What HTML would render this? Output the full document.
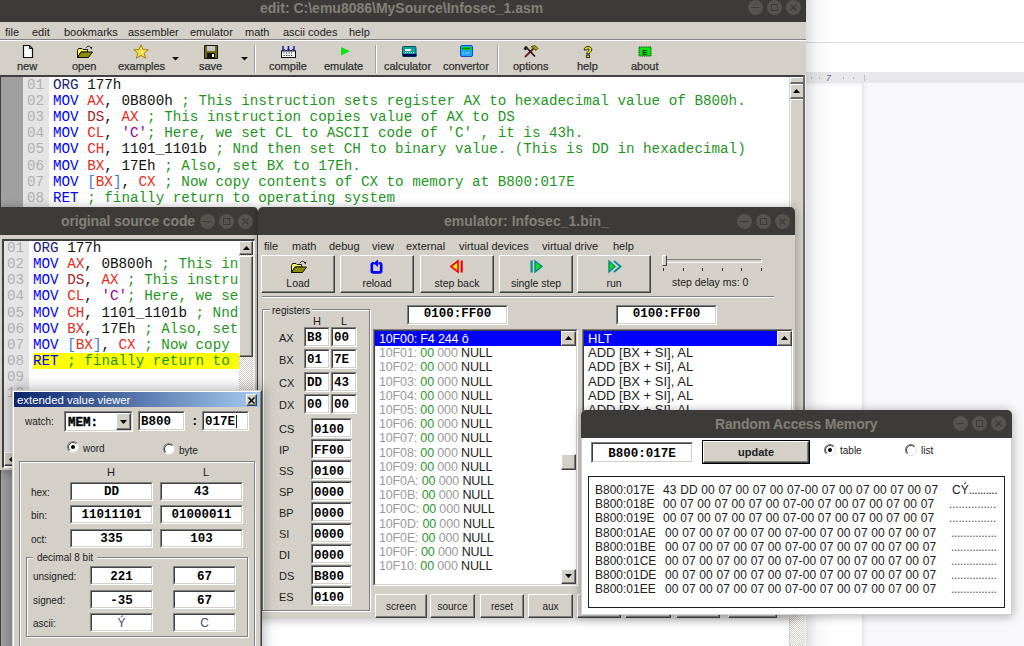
<!DOCTYPE html><html><head><meta charset="utf-8"><style>
*{box-sizing:border-box}
html,body{margin:0;padding:0;width:1024px;height:646px;overflow:hidden;background:#fff;position:relative;font-family:"Liberation Sans",sans-serif}
.a{position:absolute}
.pre{white-space:pre}
.mono{font-family:"Liberation Mono",monospace}
.k{color:#0000ff}.r{color:#e82a20}.c{color:#1e961e}.p{color:#9a00a0}.o{color:#1a1a78}.br{color:#3c78e8}.d{color:#a02424}
.dith{background-color:#d4d0c8;background-image:linear-gradient(45deg,#fff 25%,transparent 25%,transparent 75%,#fff 75%),linear-gradient(45deg,#fff 25%,transparent 25%,transparent 75%,#fff 75%);background-size:2px 2px;background-position:0 0,1px 1px}
</style></head><body>
<div class="a" style="left:806px;top:0px;width:218px;height:646px;background:#fff"></div>
<div class="a" style="left:806px;top:42px;width:218px;height:1px;background:#dcdce0"></div>
<div class="a" style="left:806px;top:72px;width:218px;height:11px;background:#e8e8ec"></div>
<div class="a" style="left:806px;top:83px;width:218px;height:4px;background:linear-gradient(rgba(0,0,0,.05),rgba(0,0,0,0))"></div>
<div class="a" style="left:862px;top:83px;width:162px;height:563px;background:linear-gradient(to right,#e4e4e8,#f2f2f5 3px,#f8f8fa 6px)"></div>
<div class="a" style="left:811px;top:77px;width:1px;height:2px;background:#b8b8bc"></div>
<div class="a" style="left:819px;top:77px;width:1px;height:2px;background:#b8b8bc"></div>
<div class="a" style="left:843px;top:77px;width:1px;height:2px;background:#b8b8bc"></div>
<div class="a" style="left:853px;top:77px;width:1px;height:2px;background:#b8b8bc"></div>
<div class="a pre " style="left:826px;top:73px;font-size:9px;line-height:10px;color:#6a6a80;font-style:italic">7</div>
<div class="a" style="left:864px;top:75px;width:1px;height:6px;background:#c0c0c4"></div>
<div class="a" style="left:806px;top:0px;width:28px;height:646px;background:linear-gradient(to right,rgba(0,0,0,.13),rgba(0,0,0,.03) 40%,rgba(0,0,0,0))"></div>
<div class="a" style="left:0px;top:0px;width:806px;height:646px;background:#d4d0c8"></div>
<div class="a" style="left:0px;top:0px;width:806px;height:22px;background:#3c3b37"></div>
<div class="a pre " style="left:260px;top:-0.5px;color:#838079;font-weight:bold;font-size:14px;line-height:17px">edit: C:\emu8086\MySource\Infosec_1.asm</div>
<div class="a" style="left:747.5px;top:0.0px;width:15px;height:15px;border-radius:50%;background:#55544f"></div>
<div class="a" style="left:766.5px;top:0.0px;width:15px;height:15px;border-radius:50%;background:#55544f"></div>
<div class="a" style="left:785.5px;top:0.0px;width:15px;height:15px;border-radius:50%;background:#55544f"></div>
<div class="a" style="left:751px;top:6.8px;width:8px;height:1.4px;background:#3c3b37"></div>
<div class="a" style="left:770.5px;top:4.0px;width:7px;height:7px;border:1.2px solid #3c3b37"></div>
<svg class="a" style="left:789.5px;top:4.0px" width="7" height="7"><path d="M0.5 0.5L6.5 6.5M6.5 0.5L0.5 6.5" stroke="#3c3b37" stroke-width="1.2"/></svg>
<div class="a" style="left:0px;top:39px;width:806px;height:1px;background:#808080"></div>
<div class="a" style="left:0px;top:40px;width:806px;height:1px;background:#fff"></div>
<div class="a pre " style="left:5px;top:25.5px;font-size:11px;line-height:13px;color:#202020">file</div>
<div class="a pre " style="left:32px;top:25.5px;font-size:11px;line-height:13px;color:#202020">edit</div>
<div class="a pre " style="left:64px;top:25.5px;font-size:11px;line-height:13px;color:#202020">bookmarks</div>
<div class="a pre " style="left:128px;top:25.5px;font-size:11px;line-height:13px;color:#202020">assembler</div>
<div class="a pre " style="left:190px;top:25.5px;font-size:11px;line-height:13px;color:#202020">emulator</div>
<div class="a pre " style="left:245px;top:25.5px;font-size:11px;line-height:13px;color:#202020">math</div>
<div class="a pre " style="left:283px;top:25.5px;font-size:11px;line-height:13px;color:#202020">ascii codes</div>
<div class="a pre " style="left:349px;top:25.5px;font-size:11px;line-height:13px;color:#202020">help</div>
<div class="a" style="left:254px;top:45px;width:2px;height:28px;background:#a0a0a0;border-right:1px solid #fff"></div>
<div class="a" style="left:375px;top:45px;width:2px;height:28px;background:#a0a0a0;border-right:1px solid #fff"></div>
<div class="a" style="left:497px;top:45px;width:2px;height:28px;background:#a0a0a0;border-right:1px solid #fff"></div>
<div class="a pre " style="left:17px;top:60px;font-size:11px;line-height:12px;color:#303030;-webkit-text-stroke:.25px #303030">new</div>
<div class="a pre " style="left:72px;top:60px;font-size:11px;line-height:12px;color:#303030;-webkit-text-stroke:.25px #303030">open</div>
<div class="a pre " style="left:118px;top:60px;font-size:11px;line-height:12px;color:#303030;-webkit-text-stroke:.25px #303030">examples</div>
<div class="a pre " style="left:199px;top:60px;font-size:11px;line-height:12px;color:#303030;-webkit-text-stroke:.25px #303030">save</div>
<div class="a pre " style="left:269px;top:60px;font-size:11px;line-height:12px;color:#303030;-webkit-text-stroke:.25px #303030">compile</div>
<div class="a pre " style="left:324px;top:60px;font-size:11px;line-height:12px;color:#303030;-webkit-text-stroke:.25px #303030">emulate</div>
<div class="a pre " style="left:384px;top:60px;font-size:11px;line-height:12px;color:#303030;-webkit-text-stroke:.25px #303030">calculator</div>
<div class="a pre " style="left:443px;top:60px;font-size:11px;line-height:12px;color:#303030;-webkit-text-stroke:.25px #303030">convertor</div>
<div class="a pre " style="left:513px;top:60px;font-size:11px;line-height:12px;color:#303030;-webkit-text-stroke:.25px #303030">options</div>
<div class="a pre " style="left:577px;top:60px;font-size:11px;line-height:12px;color:#303030;-webkit-text-stroke:.25px #303030">help</div>
<div class="a pre " style="left:631px;top:60px;font-size:11px;line-height:12px;color:#303030;-webkit-text-stroke:.25px #303030">about</div>
<svg class="a" style="left:22px;top:45px;overflow:visible" width="12" height="13" viewBox="0 0 12 13"><path d="M1.5 0.5H7.5L10.5 3.5V12.5H1.5Z" fill="#fff" stroke="#101010" stroke-width="1.2"/><path d="M7.5 0.5V3.5H10.5" fill="none" stroke="#101010" stroke-width="1"/></svg>
<svg class="a" style="left:77px;top:45px;overflow:visible" width="16" height="14" viewBox="0 0 16 14"><path d="M9 3.2C10 0.8 13 0.6 14 2.8" fill="none" stroke="#202020" stroke-width="1"/><path d="M13 2L15.5 2.2L14.2 4.6Z" fill="#101010"/><path d="M0.5 5.5L1.5 3.5H5L6 4.5H10.5V7H4L0.5 12.5Z" fill="#ffff60" stroke="#101010" stroke-width="1"/><path d="M0.5 12.5L4 7H15.5L11.5 12.5Z" fill="#8c8c00" stroke="#101010" stroke-width="1"/></svg>
<svg class="a" style="left:133px;top:44px;overflow:visible" width="16" height="15" viewBox="0 0 16 15"><path d="M8 0.8L10 5.6L15.2 5.8L11.2 9.2L12.6 14.2L8 11.4L3.4 14.2L4.8 9.2L0.8 5.8L6 5.6Z" fill="#f8e040" stroke="#a08010" stroke-width="1"/><path d="M8 3L9.3 6.6L12.8 6.8L8 10Z" fill="#fff8a0" opacity=".7"/></svg>
<svg class="a" style="left:172px;top:57px;overflow:visible" width="7" height="4" viewBox="0 0 7 4"><path d="M0 0H7L3.5 3.5Z" fill="#101010"/></svg>
<svg class="a" style="left:241px;top:57px;overflow:visible" width="7" height="4" viewBox="0 0 7 4"><path d="M0 0H7L3.5 3.5Z" fill="#101010"/></svg>
<svg class="a" style="left:204px;top:45px;overflow:visible" width="14" height="14" viewBox="0 0 14 14"><path d="M0.5 0.5H13.5V13.5H0.5Z" fill="#6c6c00" stroke="#101010" stroke-width="1"/><rect x="3" y="1" width="8" height="5" fill="#c8c8c8"/><rect x="3" y="8" width="8" height="5.5" fill="#101010"/><rect x="8" y="9" width="2" height="3" fill="#fff"/></svg>
<svg class="a" style="left:281px;top:46px;overflow:visible" width="15" height="12" viewBox="0 0 15 12"><path d="M2 0V5M7.5 0V5M13 0V5" stroke="#1010a0" stroke-width="1.4"/><path d="M1 5L3 3L5 5L7.5 3L10 5L12 3L14 5" fill="none" stroke="#3030c0" stroke-width="1"/><rect x="0.5" y="5" width="14" height="6.5" fill="#fff" stroke="#101010" stroke-width="1"/><path d="M2.5 7H12.5M2.5 9.5H12.5" stroke="#202020" stroke-width="1.2" stroke-dasharray="1.2 1.3"/></svg>
<svg class="a" style="left:341px;top:47px;overflow:visible" width="9" height="9" viewBox="0 0 9 9"><path d="M0 0L9 4.3L0 8.6Z" fill="#10e010"/></svg>
<svg class="a" style="left:402px;top:46px;overflow:visible" width="15" height="11" viewBox="0 0 15 11"><rect x="0.5" y="0.5" width="13.5" height="10" rx="1" fill="#10a0a0" stroke="#005050" stroke-width="1"/><rect x="1" y="8" width="13.5" height="2.5" fill="#000050"/><rect x="3" y="3" width="6" height="2" fill="#fff"/><path d="M3 6.5H12" stroke="#d0f0f0" stroke-width="1" stroke-dasharray="1 1"/></svg>
<svg class="a" style="left:460px;top:45px;overflow:visible" width="13" height="12" viewBox="0 0 13 12"><rect x="0.5" y="0.5" width="12" height="11" rx="1.5" fill="#20a0ff" stroke="#1050c0" stroke-width="1"/><rect x="2" y="2" width="9" height="3" fill="#00d000"/><path d="M2.5 3.5H10.5" stroke="#004000" stroke-width="1" stroke-dasharray="1 1"/><path d="M2.5 8H10.5" stroke="#e0ffff" stroke-width="1.2" stroke-dasharray="1.3 1.3"/></svg>
<svg class="a" style="left:523px;top:45px;overflow:visible" width="16" height="13" viewBox="0 0 16 13"><path d="M2 12L11 3" stroke="#702020" stroke-width="2"/><path d="M8 1.5L12 0.5L15 3.5L13 5.5L10.5 3.5Z" fill="#a0a000" stroke="#404000" stroke-width=".8"/><path d="M3 2L12 11.5" stroke="#202020" stroke-width="1.8"/><path d="M0.5 3.5L2.5 1L4.5 1.8L3.2 3.3L4 4.5L2 5.2Z" fill="#202020"/></svg>
<svg class="a" style="left:583px;top:46px;overflow:visible" width="10" height="12" viewBox="0 0 10 12"><path d="M1.2 4C1.2 1.6 3 0.6 5 0.6C7.2 0.6 8.8 1.8 8.8 3.8C8.8 6 6.2 6 6.2 8H3.8C3.8 5.2 6.2 5.2 6.2 3.8C6.2 3.2 5.7 2.7 5 2.7C4.2 2.7 3.8 3.2 3.8 4Z" fill="#f0f000" stroke="#202020" stroke-width="1"/><rect x="3.6" y="9" width="2.8" height="2.6" fill="#f0f000" stroke="#202020" stroke-width="1"/></svg>
<svg class="a" style="left:638px;top:46px;overflow:visible" width="14" height="11" viewBox="0 0 14 11"><rect x="1" y="1" width="12" height="9" fill="#10e010" stroke="#105010" stroke-width="1" stroke-dasharray="1.2 .6"/><text x="7" y="8.6" font-size="8" font-weight="bold" text-anchor="middle" fill="#003000" font-family="Liberation Sans">E</text></svg>
<div class="a" style="left:0px;top:75px;width:806px;height:571px;background:#fff;border-top:2px solid #404040"></div>
<div class="a" style="left:0px;top:77px;width:23px;height:569px;background:#a0a0a0;border-left:1px solid #404040"></div>
<div class="a" style="left:23px;top:77px;width:26px;height:569px;background:#e4e4e4"></div>
<div class="a" style="left:789px;top:77px;width:17px;height:569px;background:#d4d0c8"></div>
<div class="a dith" style="left:790px;top:611px;width:13px;height:35px"></div>
<div class="a" style="left:790px;top:77px;width:13px;height:534px;border-left:1px solid #fff"></div>
<div class="a" style="left:790px;top:77px;width:13px;height:7px;border-top:1px solid #fff;border-left:1px solid #fff;border-bottom:2px solid #6a6a6a"></div>
<div class="a" style="left:790px;top:84px;width:13px;height:15px;border-top:1px solid #fff;border-left:1px solid #fff;border-bottom:2px solid #6a6a6a"></div>
<div class="a" style="left:790px;top:99px;width:13px;height:512px;border-top:1px solid #fff;border-left:1px solid #fff;border-bottom:2px solid #6a6a6a"></div>
<svg class="a" style="left:793.0px;top:88.5px;overflow:visible" width="7" height="4" viewBox="0 0 7 4"><path d="M0 4H7L3.5 0Z" fill="#000"/></svg>
<div class="a" style="left:803px;top:75px;width:2px;height:536px;background:#6a6a6a"></div>
<div class="a" style="left:805px;top:75px;width:1px;height:571px;background:#f0f0ee"></div>
<div class="a" style="left:803px;top:611px;width:2px;height:35px;background:#e8e6e0"></div>
<div class="a pre mono" style="left:27px;top:76.8px;font-size:14.25px;line-height:16.17px;color:#b0b0b0">01
02
03
04
05
06
07
08</div>
<div class="a pre mono" style="left:53px;top:76.8px;font-size:14.25px;line-height:16.17px;color:#101010"><span class="o">ORG</span> 177h
<span class="k">MOV</span> <span class="r">AX</span>, 0B800h <span class="c">; This instruction sets register AX to hexadecimal value of B800h.</span>
<span class="k">MOV</span> <span class="d">DS</span>, <span class="r">AX</span> <span class="c">; This instruction copies value of AX to DS</span>
<span class="k">MOV</span> <span class="r">CL</span>, <span class="p">'C'</span><span class="c">; Here, we set CL to ASCII code of 'C' , it is 43h.</span>
<span class="k">MOV</span> <span class="r">CH</span>, 1101_1101b <span class="c">; Nnd then set CH to binary value. (This is DD in hexadecimal)</span>
<span class="k">MOV</span> <span class="r">BX</span>, 17Eh <span class="c">; Also, set BX to 17Eh.</span>
<span class="k">MOV</span> <span class="br">[</span><span class="r">BX</span><span class="br">]</span>, <span class="r">CX</span> <span class="c">; Now copy contents of CX to memory at B800:017E</span>
<span class="k">RET</span> <span class="c">; finally return to operating system</span></div>
<div class="a" style="left:0px;top:207px;width:258px;height:263px;background:#d4d0c8;border-right:1px solid #404040;border-radius:0 5px 0 0;box-shadow:0 1px 10px 1px rgba(0,0,0,.28)"></div>
<div class="a" style="left:0px;top:207px;width:258px;height:28px;background:#3c3b37;border-radius:0 5px 0 0"></div>
<div class="a pre " style="left:61px;top:212.5px;color:#838079;font-weight:bold;font-size:14px;line-height:17px"><span style="letter-spacing:-.15px">original source code</span></div>
<div class="a" style="left:199.5px;top:214.0px;width:15px;height:15px;border-radius:50%;background:#55544f"></div>
<div class="a" style="left:218.5px;top:214.0px;width:15px;height:15px;border-radius:50%;background:#55544f"></div>
<div class="a" style="left:237.5px;top:214.0px;width:15px;height:15px;border-radius:50%;background:#55544f"></div>
<div class="a" style="left:203px;top:220.8px;width:8px;height:1.4px;background:#3c3b37"></div>
<div class="a" style="left:222.5px;top:218.0px;width:7px;height:7px;border:1.2px solid #3c3b37"></div>
<svg class="a" style="left:241.5px;top:218.0px" width="7" height="7"><path d="M0.5 0.5L6.5 6.5M6.5 0.5L0.5 6.5" stroke="#3c3b37" stroke-width="1.2"/></svg>
<div class="a" style="left:2px;top:239px;width:253px;height:229px;background:#fff;border-top:2px solid #404040;border-left:2px solid #404040;border-right:1px solid #fff;border-bottom:1px solid #fff"></div>
<div class="a" style="left:4px;top:241px;width:25px;height:211px;background:#e4e4e4"></div>
<div class="a pre mono" style="left:7px;top:240px;font-size:14.25px;line-height:16.12px;color:#b0b0b0">01
02
03
04
05
06
07
08
09
10</div>
<div class="a" style="left:33px;top:353px;width:206px;height:16px;background:#ffff00"></div>
<div class="a" style="left:33px;top:240px;width:205px;height:212px;overflow:hidden">
<div class="a pre mono" style="left:0px;top:0px;font-size:14.25px;line-height:16.12px;color:#101010"><span class="o">ORG</span> 177h
<span class="k">MOV</span> <span class="r">AX</span>, 0B800h <span class="c">; This instruction sets register AX to hexadecimal value of B800h.</span>
<span class="k">MOV</span> <span class="d">DS</span>, <span class="r">AX</span> <span class="c">; This instruction copies value of AX to DS</span>
<span class="k">MOV</span> <span class="r">CL</span>, <span class="p">'C'</span><span class="c">; Here, we set CL to ASCII code of 'C' , it is 43h.</span>
<span class="k">MOV</span> <span class="r">CH</span>, 1101_1101b <span class="c">; Nnd then set CH to binary value. (This is DD in hexadecimal)</span>
<span class="k">MOV</span> <span class="r">BX</span>, 17Eh <span class="c">; Also, set BX to 17Eh.</span>
<span class="k">MOV</span> <span class="br">[</span><span class="r">BX</span><span class="br">]</span>, <span class="r">CX</span> <span class="c">; Now copy contents of CX to memory at B800:017E</span>
<span class="k">RET</span> <span class="c">; finally return to operating system</span></div>
</div>
<div class="a dith" style="left:239px;top:241px;width:14px;height:211px"></div>
<div class="a" style="left:239px;top:241px;width:14px;height:14px;background:#d4d0c8;border-top:1px solid #fff;border-left:1px solid #fff;border-right:1px solid #404040;border-bottom:1px solid #404040"><div style="position:absolute;left:0;top:0;right:0;bottom:0;border-right:1px solid #808080;border-bottom:1px solid #808080"></div></div>
<svg class="a" style="left:242.5px;top:246px;overflow:visible" width="7" height="4" viewBox="0 0 7 4"><path d="M0 4H7L3.5 0Z" fill="#000"/></svg>
<div class="a" style="left:239px;top:256px;width:14px;height:101px;background:#d4d0c8;border-top:1px solid #fff;border-left:1px solid #fff;border-right:1px solid #404040;border-bottom:1px solid #404040"><div style="position:absolute;left:0;top:0;right:0;bottom:0;border-right:1px solid #808080;border-bottom:1px solid #808080"></div></div>
<div class="a dith" style="left:4px;top:452px;width:249px;height:14px"></div>
<div class="a" style="left:4px;top:452px;width:14px;height:14px;background:#d4d0c8;border-top:1px solid #fff;border-left:1px solid #fff;border-right:1px solid #404040;border-bottom:1px solid #404040"><div style="position:absolute;left:0;top:0;right:0;bottom:0;border-right:1px solid #808080;border-bottom:1px solid #808080"></div></div>
<svg class="a" style="left:9px;top:455.5px;overflow:visible" width="4" height="7" viewBox="0 0 4 7"><path d="M4 0V7L0 3.5Z" fill="#000"/></svg>
<div class="a" style="left:258px;top:207px;width:537px;height:411px;background:#d4d0c8;border-radius:5px 5px 0 0;box-shadow:0 1px 10px 1px rgba(0,0,0,.28)"></div>
<div class="a" style="left:258px;top:207px;width:537px;height:28px;background:#3c3b37;border-radius:5px 5px 0 0"></div>
<div class="a pre " style="left:444px;top:213px;color:#838079;font-weight:bold;font-size:14px;line-height:17px">emulator: Infosec_1.bin_</div>
<div class="a" style="left:736.5px;top:214.0px;width:15px;height:15px;border-radius:50%;background:#55544f"></div>
<div class="a" style="left:755.5px;top:214.0px;width:15px;height:15px;border-radius:50%;background:#55544f"></div>
<div class="a" style="left:774.5px;top:214.0px;width:15px;height:15px;border-radius:50%;background:#55544f"></div>
<div class="a" style="left:740px;top:220.8px;width:8px;height:1.4px;background:#3c3b37"></div>
<div class="a" style="left:759.5px;top:218.0px;width:7px;height:7px;border:1.2px solid #3c3b37"></div>
<svg class="a" style="left:778.5px;top:218.0px" width="7" height="7"><path d="M0.5 0.5L6.5 6.5M6.5 0.5L0.5 6.5" stroke="#3c3b37" stroke-width="1.2"/></svg>
<div class="a pre " style="left:264px;top:240px;font-size:11px;line-height:13px;color:#202020">file</div>
<div class="a pre " style="left:292px;top:240px;font-size:11px;line-height:13px;color:#202020">math</div>
<div class="a pre " style="left:329px;top:240px;font-size:11px;line-height:13px;color:#202020">debug</div>
<div class="a pre " style="left:372px;top:240px;font-size:11px;line-height:13px;color:#202020">view</div>
<div class="a pre " style="left:406px;top:240px;font-size:11px;line-height:13px;color:#202020">external</div>
<div class="a pre " style="left:459px;top:240px;font-size:11px;line-height:13px;color:#202020">virtual devices</div>
<div class="a pre " style="left:542px;top:240px;font-size:11px;line-height:13px;color:#202020">virtual drive</div>
<div class="a pre " style="left:613px;top:240px;font-size:11px;line-height:13px;color:#202020">help</div>
<div class="a" style="left:261px;top:255px;width:74px;height:38px;background:#d4d0c8;border-top:1px solid #fff;border-left:1px solid #fff;border-right:1px solid #404040;border-bottom:1px solid #404040"><div style="position:absolute;left:0;top:0;right:0;bottom:0;border-right:1px solid #808080;border-bottom:1px solid #808080"></div></div>
<div class="a pre " style="left:261px;top:276.5px;font-size:10.5px;line-height:12px;color:#202020;width:74px;text-align:center">Load</div>
<div class="a" style="left:340px;top:255px;width:74px;height:38px;background:#d4d0c8;border-top:1px solid #fff;border-left:1px solid #fff;border-right:1px solid #404040;border-bottom:1px solid #404040"><div style="position:absolute;left:0;top:0;right:0;bottom:0;border-right:1px solid #808080;border-bottom:1px solid #808080"></div></div>
<div class="a pre " style="left:340px;top:276.5px;font-size:10.5px;line-height:12px;color:#202020;width:74px;text-align:center">reload</div>
<div class="a" style="left:420px;top:255px;width:74px;height:38px;background:#d4d0c8;border-top:1px solid #fff;border-left:1px solid #fff;border-right:1px solid #404040;border-bottom:1px solid #404040"><div style="position:absolute;left:0;top:0;right:0;bottom:0;border-right:1px solid #808080;border-bottom:1px solid #808080"></div></div>
<div class="a pre " style="left:420px;top:276.5px;font-size:10.5px;line-height:12px;color:#202020;width:74px;text-align:center">step back</div>
<div class="a" style="left:499px;top:255px;width:74px;height:38px;background:#d4d0c8;border-top:1px solid #fff;border-left:1px solid #fff;border-right:1px solid #404040;border-bottom:1px solid #404040"><div style="position:absolute;left:0;top:0;right:0;bottom:0;border-right:1px solid #808080;border-bottom:1px solid #808080"></div></div>
<div class="a pre " style="left:499px;top:276.5px;font-size:10.5px;line-height:12px;color:#202020;width:74px;text-align:center">single step</div>
<div class="a" style="left:577px;top:255px;width:74px;height:38px;background:#d4d0c8;border-top:1px solid #fff;border-left:1px solid #fff;border-right:1px solid #404040;border-bottom:1px solid #404040"><div style="position:absolute;left:0;top:0;right:0;bottom:0;border-right:1px solid #808080;border-bottom:1px solid #808080"></div></div>
<div class="a pre " style="left:577px;top:276.5px;font-size:10.5px;line-height:12px;color:#202020;width:74px;text-align:center">run</div>
<svg class="a" style="left:291px;top:260px;overflow:visible" width="16" height="14" viewBox="0 0 16 14"><path d="M9 3.2C10 0.8 13 0.6 14 2.8" fill="none" stroke="#202020" stroke-width="1"/><path d="M13 2L15.5 2.2L14.2 4.6Z" fill="#101010"/><path d="M0.5 5.5L1.5 3.5H5L6 4.5H10.5V7H4L0.5 12.5Z" fill="#ffff60" stroke="#101010" stroke-width="1"/><path d="M0.5 12.5L4 7H15.5L11.5 12.5Z" fill="#8c8c00" stroke="#101010" stroke-width="1"/></svg>
<svg class="a" style="left:369px;top:259px;overflow:visible" width="15" height="16" viewBox="0 0 15 16"><path d="M5 4.2H4.2Q2.8 4.2 2.8 5.6V12Q2.8 13.4 4.2 13.4H10.8Q12.2 13.4 12.2 12V5.6Q12.2 4.2 10.8 4.2H9.5" fill="none" stroke="#0000ff" stroke-width="2.6"/><path d="M4.5 4.2L9 0.5V8Z" fill="#0000ff"/></svg>
<svg class="a" style="left:450px;top:260px;overflow:visible" width="14" height="13" viewBox="0 0 14 13"><path d="M1 6.5L8 1V12Z" fill="#ffff00" stroke="#ff0000" stroke-width="1.6"/><rect x="10.6" y="0.5" width="2.2" height="12" fill="#ff0000"/></svg>
<svg class="a" style="left:530px;top:260px;overflow:visible" width="13" height="13" viewBox="0 0 13 13"><rect x="0.5" y="0.5" width="2.2" height="12" fill="#008c8c"/><path d="M5 1V12L12 6.5Z" fill="#10e010" stroke="#008c8c" stroke-width="1.4"/></svg>
<svg class="a" style="left:608px;top:260px;overflow:visible" width="14" height="13" viewBox="0 0 14 13"><path d="M1 1V12L7 6.5Z" fill="#10e010" stroke="#008c8c" stroke-width="1.4"/><path d="M6 1L12.5 6.5L6 12" fill="none" stroke="#008c8c" stroke-width="1.8"/></svg>
<div class="a" style="left:662px;top:259px;width:100px;height:4px;border-top:1px solid #808080;border-left:1px solid #808080;border-bottom:1px solid #fff;border-right:1px solid #fff;background:#d4d0c8"></div>
<div class="a" style="left:662px;top:255px;width:5px;height:11px;background:#d4d0c8;border-top:1px solid #fff;border-left:1px solid #fff;border-right:1px solid #404040;border-bottom:1px solid #404040"></div>
<div class="a" style="left:663.0px;top:268px;width:1px;height:3px;background:#303030"></div>
<div class="a" style="left:682.6px;top:268px;width:1px;height:3px;background:#303030"></div>
<div class="a" style="left:702.2px;top:268px;width:1px;height:3px;background:#303030"></div>
<div class="a" style="left:721.8px;top:268px;width:1px;height:3px;background:#303030"></div>
<div class="a" style="left:741.4px;top:268px;width:1px;height:3px;background:#303030"></div>
<div class="a" style="left:761.0px;top:268px;width:1px;height:3px;background:#303030"></div>
<div class="a" style="left:262px;top:296px;width:512px;height:2px;border-top:1px solid #808080;border-bottom:1px solid #fff"></div>
<div class="a pre " style="left:672px;top:275.5px;font-size:10.5px;line-height:12px;color:#202020">step delay ms: 0</div>
<div class="a" style="left:407px;top:305px;width:101px;height:20px;background:#fff;border-top:1px solid #808080;border-left:1px solid #808080;border-right:1px solid #fff;border-bottom:1px solid #fff"><div style="position:absolute;left:0;top:0;right:0;bottom:0;border-top:1px solid #404040;border-left:1px solid #404040;border-right:1px solid #d4d0c8;border-bottom:1px solid #d4d0c8"></div></div>
<div class="a pre mono" style="left:407px;top:307px;font-size:12.5px;font-weight:bold;line-height:15px;color:#000;width:101px;text-align:center">0100:FF00</div>
<div class="a" style="left:616px;top:305px;width:101px;height:20px;background:#fff;border-top:1px solid #808080;border-left:1px solid #808080;border-right:1px solid #fff;border-bottom:1px solid #fff"><div style="position:absolute;left:0;top:0;right:0;bottom:0;border-top:1px solid #404040;border-left:1px solid #404040;border-right:1px solid #d4d0c8;border-bottom:1px solid #d4d0c8"></div></div>
<div class="a pre mono" style="left:616px;top:307px;font-size:12.5px;font-weight:bold;line-height:15px;color:#000;width:101px;text-align:center">0100:FF00</div>
<div class="a" style="left:262px;top:309px;width:108px;height:302px;border:1px solid #808080;box-shadow:inset 1px 1px 0 #fff,1px 1px 0 #fff"></div>
<div class="a" style="left:270px;top:304px;width:42px;height:12px;background:#d4d0c8"></div>
<div class="a pre " style="left:272px;top:305px;font-size:10px;line-height:12px;color:#202020">registers</div>
<div class="a pre " style="left:313px;top:315px;font-size:11px;line-height:12px;color:#202020">H</div>
<div class="a pre " style="left:341px;top:315px;font-size:11px;line-height:12px;color:#202020">L</div>
<div class="a pre " style="left:279px;top:332px;font-size:11px;line-height:12px;color:#202020">AX</div>
<div class="a" style="left:304px;top:327px;width:26px;height:20px;background:#fff;border-top:1px solid #808080;border-left:1px solid #808080;border-right:1px solid #fff;border-bottom:1px solid #fff"><div style="position:absolute;left:0;top:0;right:0;bottom:0;border-top:1px solid #404040;border-left:1px solid #404040;border-right:1px solid #d4d0c8;border-bottom:1px solid #d4d0c8"></div></div>
<div class="a" style="left:331px;top:327px;width:26px;height:20px;background:#fff;border-top:1px solid #808080;border-left:1px solid #808080;border-right:1px solid #fff;border-bottom:1px solid #fff"><div style="position:absolute;left:0;top:0;right:0;bottom:0;border-top:1px solid #404040;border-left:1px solid #404040;border-right:1px solid #d4d0c8;border-bottom:1px solid #d4d0c8"></div></div>
<div class="a pre mono" style="left:307px;top:331px;font-size:12.5px;font-weight:bold;line-height:15px;color:#000">B8</div>
<div class="a pre mono" style="left:334px;top:331px;font-size:12.5px;font-weight:bold;line-height:15px;color:#000">00</div>
<div class="a pre " style="left:279px;top:354px;font-size:11px;line-height:12px;color:#202020">BX</div>
<div class="a" style="left:304px;top:349px;width:26px;height:20px;background:#fff;border-top:1px solid #808080;border-left:1px solid #808080;border-right:1px solid #fff;border-bottom:1px solid #fff"><div style="position:absolute;left:0;top:0;right:0;bottom:0;border-top:1px solid #404040;border-left:1px solid #404040;border-right:1px solid #d4d0c8;border-bottom:1px solid #d4d0c8"></div></div>
<div class="a" style="left:331px;top:349px;width:26px;height:20px;background:#fff;border-top:1px solid #808080;border-left:1px solid #808080;border-right:1px solid #fff;border-bottom:1px solid #fff"><div style="position:absolute;left:0;top:0;right:0;bottom:0;border-top:1px solid #404040;border-left:1px solid #404040;border-right:1px solid #d4d0c8;border-bottom:1px solid #d4d0c8"></div></div>
<div class="a pre mono" style="left:307px;top:353px;font-size:12.5px;font-weight:bold;line-height:15px;color:#000">01</div>
<div class="a pre mono" style="left:334px;top:353px;font-size:12.5px;font-weight:bold;line-height:15px;color:#000">7E</div>
<div class="a pre " style="left:279px;top:377px;font-size:11px;line-height:12px;color:#202020">CX</div>
<div class="a" style="left:304px;top:372px;width:26px;height:20px;background:#fff;border-top:1px solid #808080;border-left:1px solid #808080;border-right:1px solid #fff;border-bottom:1px solid #fff"><div style="position:absolute;left:0;top:0;right:0;bottom:0;border-top:1px solid #404040;border-left:1px solid #404040;border-right:1px solid #d4d0c8;border-bottom:1px solid #d4d0c8"></div></div>
<div class="a" style="left:331px;top:372px;width:26px;height:20px;background:#fff;border-top:1px solid #808080;border-left:1px solid #808080;border-right:1px solid #fff;border-bottom:1px solid #fff"><div style="position:absolute;left:0;top:0;right:0;bottom:0;border-top:1px solid #404040;border-left:1px solid #404040;border-right:1px solid #d4d0c8;border-bottom:1px solid #d4d0c8"></div></div>
<div class="a pre mono" style="left:307px;top:376px;font-size:12.5px;font-weight:bold;line-height:15px;color:#000">DD</div>
<div class="a pre mono" style="left:334px;top:376px;font-size:12.5px;font-weight:bold;line-height:15px;color:#000">43</div>
<div class="a pre " style="left:279px;top:399px;font-size:11px;line-height:12px;color:#202020">DX</div>
<div class="a" style="left:304px;top:394px;width:26px;height:20px;background:#fff;border-top:1px solid #808080;border-left:1px solid #808080;border-right:1px solid #fff;border-bottom:1px solid #fff"><div style="position:absolute;left:0;top:0;right:0;bottom:0;border-top:1px solid #404040;border-left:1px solid #404040;border-right:1px solid #d4d0c8;border-bottom:1px solid #d4d0c8"></div></div>
<div class="a" style="left:331px;top:394px;width:26px;height:20px;background:#fff;border-top:1px solid #808080;border-left:1px solid #808080;border-right:1px solid #fff;border-bottom:1px solid #fff"><div style="position:absolute;left:0;top:0;right:0;bottom:0;border-top:1px solid #404040;border-left:1px solid #404040;border-right:1px solid #d4d0c8;border-bottom:1px solid #d4d0c8"></div></div>
<div class="a pre mono" style="left:307px;top:398px;font-size:12.5px;font-weight:bold;line-height:15px;color:#000">00</div>
<div class="a pre mono" style="left:334px;top:398px;font-size:12.5px;font-weight:bold;line-height:15px;color:#000">00</div>
<div class="a pre " style="left:279px;top:423px;font-size:11px;line-height:12px;color:#202020">CS</div>
<div class="a" style="left:311px;top:418px;width:41px;height:20px;background:#fff;border-top:1px solid #808080;border-left:1px solid #808080;border-right:1px solid #fff;border-bottom:1px solid #fff"><div style="position:absolute;left:0;top:0;right:0;bottom:0;border-top:1px solid #404040;border-left:1px solid #404040;border-right:1px solid #d4d0c8;border-bottom:1px solid #d4d0c8"></div></div>
<div class="a pre mono" style="left:314px;top:422.5px;font-size:12.5px;font-weight:bold;line-height:15px;color:#000">0100</div>
<div class="a pre " style="left:279px;top:444px;font-size:11px;line-height:12px;color:#202020">IP</div>
<div class="a" style="left:311px;top:439px;width:41px;height:20px;background:#fff;border-top:1px solid #808080;border-left:1px solid #808080;border-right:1px solid #fff;border-bottom:1px solid #fff"><div style="position:absolute;left:0;top:0;right:0;bottom:0;border-top:1px solid #404040;border-left:1px solid #404040;border-right:1px solid #d4d0c8;border-bottom:1px solid #d4d0c8"></div></div>
<div class="a pre mono" style="left:314px;top:443.5px;font-size:12.5px;font-weight:bold;line-height:15px;color:#000">FF00</div>
<div class="a pre " style="left:279px;top:465px;font-size:11px;line-height:12px;color:#202020">SS</div>
<div class="a" style="left:311px;top:460px;width:41px;height:20px;background:#fff;border-top:1px solid #808080;border-left:1px solid #808080;border-right:1px solid #fff;border-bottom:1px solid #fff"><div style="position:absolute;left:0;top:0;right:0;bottom:0;border-top:1px solid #404040;border-left:1px solid #404040;border-right:1px solid #d4d0c8;border-bottom:1px solid #d4d0c8"></div></div>
<div class="a pre mono" style="left:314px;top:464.5px;font-size:12.5px;font-weight:bold;line-height:15px;color:#000">0100</div>
<div class="a pre " style="left:279px;top:486px;font-size:11px;line-height:12px;color:#202020">SP</div>
<div class="a" style="left:311px;top:481px;width:41px;height:20px;background:#fff;border-top:1px solid #808080;border-left:1px solid #808080;border-right:1px solid #fff;border-bottom:1px solid #fff"><div style="position:absolute;left:0;top:0;right:0;bottom:0;border-top:1px solid #404040;border-left:1px solid #404040;border-right:1px solid #d4d0c8;border-bottom:1px solid #d4d0c8"></div></div>
<div class="a pre mono" style="left:314px;top:485.5px;font-size:12.5px;font-weight:bold;line-height:15px;color:#000">0000</div>
<div class="a pre " style="left:279px;top:507px;font-size:11px;line-height:12px;color:#202020">BP</div>
<div class="a" style="left:311px;top:502px;width:41px;height:20px;background:#fff;border-top:1px solid #808080;border-left:1px solid #808080;border-right:1px solid #fff;border-bottom:1px solid #fff"><div style="position:absolute;left:0;top:0;right:0;bottom:0;border-top:1px solid #404040;border-left:1px solid #404040;border-right:1px solid #d4d0c8;border-bottom:1px solid #d4d0c8"></div></div>
<div class="a pre mono" style="left:314px;top:506.5px;font-size:12.5px;font-weight:bold;line-height:15px;color:#000">0000</div>
<div class="a pre " style="left:279px;top:528px;font-size:11px;line-height:12px;color:#202020">SI</div>
<div class="a" style="left:311px;top:523px;width:41px;height:20px;background:#fff;border-top:1px solid #808080;border-left:1px solid #808080;border-right:1px solid #fff;border-bottom:1px solid #fff"><div style="position:absolute;left:0;top:0;right:0;bottom:0;border-top:1px solid #404040;border-left:1px solid #404040;border-right:1px solid #d4d0c8;border-bottom:1px solid #d4d0c8"></div></div>
<div class="a pre mono" style="left:314px;top:527.5px;font-size:12.5px;font-weight:bold;line-height:15px;color:#000">0000</div>
<div class="a pre " style="left:279px;top:549px;font-size:11px;line-height:12px;color:#202020">DI</div>
<div class="a" style="left:311px;top:544px;width:41px;height:20px;background:#fff;border-top:1px solid #808080;border-left:1px solid #808080;border-right:1px solid #fff;border-bottom:1px solid #fff"><div style="position:absolute;left:0;top:0;right:0;bottom:0;border-top:1px solid #404040;border-left:1px solid #404040;border-right:1px solid #d4d0c8;border-bottom:1px solid #d4d0c8"></div></div>
<div class="a pre mono" style="left:314px;top:548.5px;font-size:12.5px;font-weight:bold;line-height:15px;color:#000">0000</div>
<div class="a pre " style="left:279px;top:570px;font-size:11px;line-height:12px;color:#202020">DS</div>
<div class="a" style="left:311px;top:565px;width:41px;height:20px;background:#fff;border-top:1px solid #808080;border-left:1px solid #808080;border-right:1px solid #fff;border-bottom:1px solid #fff"><div style="position:absolute;left:0;top:0;right:0;bottom:0;border-top:1px solid #404040;border-left:1px solid #404040;border-right:1px solid #d4d0c8;border-bottom:1px solid #d4d0c8"></div></div>
<div class="a pre mono" style="left:314px;top:569.5px;font-size:12.5px;font-weight:bold;line-height:15px;color:#000">B800</div>
<div class="a pre " style="left:279px;top:591px;font-size:11px;line-height:12px;color:#202020">ES</div>
<div class="a" style="left:311px;top:586px;width:41px;height:20px;background:#fff;border-top:1px solid #808080;border-left:1px solid #808080;border-right:1px solid #fff;border-bottom:1px solid #fff"><div style="position:absolute;left:0;top:0;right:0;bottom:0;border-top:1px solid #404040;border-left:1px solid #404040;border-right:1px solid #d4d0c8;border-bottom:1px solid #d4d0c8"></div></div>
<div class="a pre mono" style="left:314px;top:590.5px;font-size:12.5px;font-weight:bold;line-height:15px;color:#000">0100</div>
<div class="a" style="left:373px;top:329px;width:205px;height:257px;background:#fff;border-top:1px solid #808080;border-left:1px solid #808080;border-right:1px solid #fff;border-bottom:1px solid #fff"><div style="position:absolute;left:0;top:0;right:0;bottom:0;border-top:1px solid #404040;border-left:1px solid #404040;border-right:1px solid #d4d0c8;border-bottom:1px solid #d4d0c8"></div></div>
<div class="a" style="left:375px;top:331px;width:186px;height:15px;background:#0000ff"></div>
<div class="a pre " style="left:379px;top:332px;font-size:12.5px;line-height:14.2px;color:#fff;letter-spacing:-.15px">10F00: F4 244 &ocirc;</div>
<div class="a pre " style="left:379px;top:346.2px;font-size:12.5px;line-height:14.2px;color:#9a9a9a;letter-spacing:-.15px">10F01: <span style="color:#2e962e">00</span> 000 <span style="color:#202020">NULL</span>
10F02: <span style="color:#2e962e">00</span> 000 <span style="color:#202020">NULL</span>
10F03: <span style="color:#2e962e">00</span> 000 <span style="color:#202020">NULL</span>
10F04: <span style="color:#2e962e">00</span> 000 <span style="color:#202020">NULL</span>
10F05: <span style="color:#2e962e">00</span> 000 <span style="color:#202020">NULL</span>
10F06: <span style="color:#2e962e">00</span> 000 <span style="color:#202020">NULL</span>
10F07: <span style="color:#2e962e">00</span> 000 <span style="color:#202020">NULL</span>
10F08: <span style="color:#2e962e">00</span> 000 <span style="color:#202020">NULL</span>
10F09: <span style="color:#2e962e">00</span> 000 <span style="color:#202020">NULL</span>
10F0A: <span style="color:#2e962e">00</span> 000 <span style="color:#202020">NULL</span>
10F0B: <span style="color:#2e962e">00</span> 000 <span style="color:#202020">NULL</span>
10F0C: <span style="color:#2e962e">00</span> 000 <span style="color:#202020">NULL</span>
10F0D: <span style="color:#2e962e">00</span> 000 <span style="color:#202020">NULL</span>
10F0E: <span style="color:#2e962e">00</span> 000 <span style="color:#202020">NULL</span>
10F0F: <span style="color:#2e962e">00</span> 000 <span style="color:#202020">NULL</span>
10F10: <span style="color:#2e962e">00</span> 000 <span style="color:#202020">NULL</span></div>
<div class="a" style="left:561px;top:331px;width:15px;height:15px;background:#d4d0c8;border-top:1px solid #fff;border-left:1px solid #fff;border-right:1px solid #404040;border-bottom:1px solid #404040"><div style="position:absolute;left:0;top:0;right:0;bottom:0;border-right:1px solid #808080;border-bottom:1px solid #808080"></div></div>
<svg class="a" style="left:564.5px;top:336px;overflow:visible" width="7" height="4" viewBox="0 0 7 4"><path d="M0 4H7L3.5 0Z" fill="#000"/></svg>
<div class="a" style="left:561px;top:454px;width:15px;height:16px;background:#d4d0c8;border-top:1px solid #fff;border-left:1px solid #fff;border-right:1px solid #404040;border-bottom:1px solid #404040"><div style="position:absolute;left:0;top:0;right:0;bottom:0;border-right:1px solid #808080;border-bottom:1px solid #808080"></div></div>
<div class="a" style="left:561px;top:569px;width:15px;height:15px;background:#d4d0c8;border-top:1px solid #fff;border-left:1px solid #fff;border-right:1px solid #404040;border-bottom:1px solid #404040"><div style="position:absolute;left:0;top:0;right:0;bottom:0;border-right:1px solid #808080;border-bottom:1px solid #808080"></div></div>
<svg class="a" style="left:564.5px;top:574px;overflow:visible" width="7" height="4" viewBox="0 0 7 4"><path d="M0 0H7L3.5 4Z" fill="#000"/></svg>
<div class="a" style="left:582px;top:329px;width:211px;height:257px;background:#fff;border-top:1px solid #808080;border-left:1px solid #808080;border-right:1px solid #fff;border-bottom:1px solid #fff"><div style="position:absolute;left:0;top:0;right:0;bottom:0;border-top:1px solid #404040;border-left:1px solid #404040;border-right:1px solid #d4d0c8;border-bottom:1px solid #d4d0c8"></div></div>
<div class="a" style="left:584px;top:331px;width:193px;height:15px;background:#0000ff"></div>
<div class="a pre " style="left:588px;top:332px;font-size:13px;line-height:14.2px;color:#fff">HLT</div>
<div class="a pre " style="left:588px;top:346.2px;font-size:13px;line-height:14.2px;color:#202020">ADD [BX + SI], AL
ADD [BX + SI], AL
ADD [BX + SI], AL
ADD [BX + SI], AL
ADD [BX + SI], AL
ADD [BX + SI], AL
ADD [BX + SI], AL
ADD [BX + SI], AL
ADD [BX + SI], AL
ADD [BX + SI], AL
ADD [BX + SI], AL
ADD [BX + SI], AL
ADD [BX + SI], AL
ADD [BX + SI], AL
ADD [BX + SI], AL
ADD [BX + SI], AL</div>
<div class="a" style="left:777px;top:331px;width:15px;height:15px;background:#d4d0c8;border-top:1px solid #fff;border-left:1px solid #fff;border-right:1px solid #404040;border-bottom:1px solid #404040"><div style="position:absolute;left:0;top:0;right:0;bottom:0;border-right:1px solid #808080;border-bottom:1px solid #808080"></div></div>
<svg class="a" style="left:780.5px;top:336px;overflow:visible" width="7" height="4" viewBox="0 0 7 4"><path d="M0 4H7L3.5 0Z" fill="#000"/></svg>
<div class="a" style="left:375px;top:594px;width:52px;height:24px;background:#d4d0c8;border-top:1px solid #fff;border-left:1px solid #fff;border-right:1px solid #404040;border-bottom:1px solid #404040"><div style="position:absolute;left:0;top:0;right:0;bottom:0;border-right:1px solid #808080;border-bottom:1px solid #808080"></div></div>
<div class="a pre " style="left:375px;top:601px;font-size:10px;line-height:12px;color:#202020;width:52px;text-align:center">screen</div>
<div class="a" style="left:430px;top:594px;width:45px;height:24px;background:#d4d0c8;border-top:1px solid #fff;border-left:1px solid #fff;border-right:1px solid #404040;border-bottom:1px solid #404040"><div style="position:absolute;left:0;top:0;right:0;bottom:0;border-right:1px solid #808080;border-bottom:1px solid #808080"></div></div>
<div class="a pre " style="left:430px;top:601px;font-size:10px;line-height:12px;color:#202020;width:45px;text-align:center">source</div>
<div class="a" style="left:480px;top:594px;width:44px;height:24px;background:#d4d0c8;border-top:1px solid #fff;border-left:1px solid #fff;border-right:1px solid #404040;border-bottom:1px solid #404040"><div style="position:absolute;left:0;top:0;right:0;bottom:0;border-right:1px solid #808080;border-bottom:1px solid #808080"></div></div>
<div class="a pre " style="left:480px;top:601px;font-size:10px;line-height:12px;color:#202020;width:44px;text-align:center">reset</div>
<div class="a" style="left:528px;top:594px;width:45px;height:24px;background:#d4d0c8;border-top:1px solid #fff;border-left:1px solid #fff;border-right:1px solid #404040;border-bottom:1px solid #404040"><div style="position:absolute;left:0;top:0;right:0;bottom:0;border-right:1px solid #808080;border-bottom:1px solid #808080"></div></div>
<div class="a pre " style="left:528px;top:601px;font-size:10px;line-height:12px;color:#202020;width:45px;text-align:center">aux</div>
<div class="a" style="left:577px;top:594px;width:44px;height:24px;background:#d4d0c8;border-top:1px solid #fff;border-left:1px solid #fff;border-right:1px solid #404040;border-bottom:1px solid #404040"><div style="position:absolute;left:0;top:0;right:0;bottom:0;border-right:1px solid #808080;border-bottom:1px solid #808080"></div></div>
<div class="a pre " style="left:577px;top:601px;font-size:10px;line-height:12px;color:#202020;width:44px;text-align:center"></div>
<div class="a" style="left:625px;top:594px;width:46px;height:24px;background:#d4d0c8;border-top:1px solid #fff;border-left:1px solid #fff;border-right:1px solid #404040;border-bottom:1px solid #404040"><div style="position:absolute;left:0;top:0;right:0;bottom:0;border-right:1px solid #808080;border-bottom:1px solid #808080"></div></div>
<div class="a pre " style="left:625px;top:601px;font-size:10px;line-height:12px;color:#202020;width:46px;text-align:center"></div>
<div class="a" style="left:676px;top:594px;width:44px;height:24px;background:#d4d0c8;border-top:1px solid #fff;border-left:1px solid #fff;border-right:1px solid #404040;border-bottom:1px solid #404040"><div style="position:absolute;left:0;top:0;right:0;bottom:0;border-right:1px solid #808080;border-bottom:1px solid #808080"></div></div>
<div class="a pre " style="left:676px;top:601px;font-size:10px;line-height:12px;color:#202020;width:44px;text-align:center"></div>
<div class="a" style="left:728px;top:594px;width:49px;height:24px;background:#d4d0c8;border-top:1px solid #fff;border-left:1px solid #fff;border-right:1px solid #404040;border-bottom:1px solid #404040"><div style="position:absolute;left:0;top:0;right:0;bottom:0;border-right:1px solid #808080;border-bottom:1px solid #808080"></div></div>
<div class="a pre " style="left:728px;top:601px;font-size:10px;line-height:12px;color:#202020;width:49px;text-align:center"></div>
<div class="a" style="left:12px;top:390px;width:250px;height:270px;background:#d4d0c8;border-top:1px solid #d4d0c8;border-left:1px solid #d4d0c8;border-right:1px solid #404040;box-shadow:0 0 12px 2px rgba(0,0,0,.28)"><div style="position:absolute;left:0;top:0;right:0;bottom:0;border-top:1px solid #fff;border-left:1px solid #fff;border-right:1px solid #808080"></div></div>
<div class="a" style="left:14px;top:392px;width:246px;height:15px;background:linear-gradient(to right,#0a246a,#a6caf0)"></div>
<div class="a pre " style="left:17px;top:393.5px;font-size:11.4px;line-height:13px;color:#fff">extended value viewer</div>
<div class="a" style="left:246px;top:394px;width:11px;height:12px;background:#d4d0c8;border-top:1px solid #fff;border-left:1px solid #fff;border-right:1px solid #404040;border-bottom:1px solid #404040"><div style="position:absolute;left:0;top:0;right:0;bottom:0;border-right:1px solid #808080;border-bottom:1px solid #808080"></div></div>
<svg class="a" style="left:248px;top:396.5px;overflow:visible" width="7" height="7" viewBox="0 0 7 7"><path d="M0.5 0.5L6.5 6.5M6.5 0.5L0.5 6.5" stroke="#000" stroke-width="1.5"/></svg>
<div class="a pre " style="left:25px;top:416px;font-size:10px;line-height:12px;color:#202020">watch:</div>
<div class="a" style="left:64px;top:411px;width:69px;height:21px;background:#fff;border-top:1px solid #808080;border-left:1px solid #808080;border-right:1px solid #fff;border-bottom:1px solid #fff"><div style="position:absolute;left:0;top:0;right:0;bottom:0;border-top:1px solid #404040;border-left:1px solid #404040;border-right:1px solid #d4d0c8;border-bottom:1px solid #d4d0c8"></div></div>
<div class="a" style="left:116px;top:413px;width:15px;height:17px;background:#d4d0c8;border-top:1px solid #fff;border-left:1px solid #fff;border-right:1px solid #404040;border-bottom:1px solid #404040"><div style="position:absolute;left:0;top:0;right:0;bottom:0;border-right:1px solid #808080;border-bottom:1px solid #808080"></div></div>
<svg class="a" style="left:120.0px;top:419.5px;overflow:visible" width="7" height="4" viewBox="0 0 7 4"><path d="M0 0H7L3.5 4Z" fill="#000"/></svg>
<div class="a pre mono" style="left:68px;top:415.5px;font-size:12.5px;font-weight:bold;line-height:15px;color:#000;-webkit-text-stroke:.4px #000">MEM:</div>
<div class="a" style="left:138px;top:411px;width:47px;height:20px;background:#fff;border-top:1px solid #808080;border-left:1px solid #808080;border-right:1px solid #fff;border-bottom:1px solid #fff"><div style="position:absolute;left:0;top:0;right:0;bottom:0;border-top:1px solid #404040;border-left:1px solid #404040;border-right:1px solid #d4d0c8;border-bottom:1px solid #d4d0c8"></div></div>
<div class="a pre mono" style="left:141px;top:415px;font-size:12.5px;font-weight:bold;line-height:15px;color:#000">B800</div>
<div class="a pre mono" style="left:191px;top:415px;font-size:12.5px;font-weight:bold;line-height:15px;color:#000">:</div>
<div class="a" style="left:202px;top:411px;width:47px;height:20px;background:#fff;border-top:1px solid #808080;border-left:1px solid #808080;border-right:1px solid #fff;border-bottom:1px solid #fff"><div style="position:absolute;left:0;top:0;right:0;bottom:0;border-top:1px solid #404040;border-left:1px solid #404040;border-right:1px solid #d4d0c8;border-bottom:1px solid #d4d0c8"></div></div>
<div class="a pre mono" style="left:205px;top:415px;font-size:12.5px;font-weight:bold;line-height:15px;color:#000">017E</div>
<div class="a" style="left:236px;top:415px;width:1px;height:13px;background:#202020"></div>
<svg class="a" style="left:67px;top:441px;overflow:visible" width="12" height="12" viewBox="0 0 12 12"><circle cx="6" cy="6" r="5.5" fill="#fff" stroke="#e0ddd6" stroke-width="1"/><path d="M2.1 9.9A5.5 5.5 0 0 1 9.9 2.1" fill="none" stroke="#808080" stroke-width="1.1"/><path d="M2.8 9.2A4.5 4.5 0 0 1 9.2 2.8" fill="none" stroke="#404040" stroke-width="1"/><circle cx="6" cy="6" r="2" fill="#000"/></svg>
<div class="a pre " style="left:83px;top:443px;font-size:10px;line-height:12px;color:#202020">word</div>
<svg class="a" style="left:163px;top:443px;overflow:visible" width="12" height="12" viewBox="0 0 12 12"><circle cx="6" cy="6" r="5.5" fill="#fff" stroke="#e0ddd6" stroke-width="1"/><path d="M2.1 9.9A5.5 5.5 0 0 1 9.9 2.1" fill="none" stroke="#808080" stroke-width="1.1"/><path d="M2.8 9.2A4.5 4.5 0 0 1 9.2 2.8" fill="none" stroke="#404040" stroke-width="1"/></svg>
<div class="a pre " style="left:179px;top:445px;font-size:10px;line-height:12px;color:#202020">byte</div>
<div class="a" style="left:19px;top:461px;width:236px;height:200px;border:1px solid #808080;box-shadow:inset 1px 1px 0 #fff,1px 1px 0 #fff"></div>
<div class="a pre " style="left:107px;top:466px;font-size:11px;line-height:12px;color:#202020">H</div>
<div class="a pre " style="left:203px;top:466px;font-size:11px;line-height:12px;color:#202020">L</div>
<div class="a pre " style="left:31px;top:487px;font-size:10px;line-height:12px;color:#202020">hex:</div>
<div class="a" style="left:70px;top:482px;width:83px;height:19px;background:#fff;border-top:1px solid #808080;border-left:1px solid #808080;border-right:1px solid #fff;border-bottom:1px solid #fff"><div style="position:absolute;left:0;top:0;right:0;bottom:0;border-top:1px solid #404040;border-left:1px solid #404040;border-right:1px solid #d4d0c8;border-bottom:1px solid #d4d0c8"></div></div>
<div class="a" style="left:160px;top:482px;width:83px;height:19px;background:#fff;border-top:1px solid #808080;border-left:1px solid #808080;border-right:1px solid #fff;border-bottom:1px solid #fff"><div style="position:absolute;left:0;top:0;right:0;bottom:0;border-top:1px solid #404040;border-left:1px solid #404040;border-right:1px solid #d4d0c8;border-bottom:1px solid #d4d0c8"></div></div>
<div class="a pre mono" style="left:70px;top:485px;font-size:12.5px;font-weight:bold;line-height:15px;color:#000;width:83px;text-align:center">DD</div>
<div class="a pre mono" style="left:160px;top:485px;font-size:12.5px;font-weight:bold;line-height:15px;color:#000;width:83px;text-align:center">43</div>
<div class="a pre " style="left:31px;top:510px;font-size:10px;line-height:12px;color:#202020">bin:</div>
<div class="a" style="left:70px;top:505px;width:83px;height:19px;background:#fff;border-top:1px solid #808080;border-left:1px solid #808080;border-right:1px solid #fff;border-bottom:1px solid #fff"><div style="position:absolute;left:0;top:0;right:0;bottom:0;border-top:1px solid #404040;border-left:1px solid #404040;border-right:1px solid #d4d0c8;border-bottom:1px solid #d4d0c8"></div></div>
<div class="a" style="left:160px;top:505px;width:83px;height:19px;background:#fff;border-top:1px solid #808080;border-left:1px solid #808080;border-right:1px solid #fff;border-bottom:1px solid #fff"><div style="position:absolute;left:0;top:0;right:0;bottom:0;border-top:1px solid #404040;border-left:1px solid #404040;border-right:1px solid #d4d0c8;border-bottom:1px solid #d4d0c8"></div></div>
<div class="a pre mono" style="left:70px;top:508px;font-size:12.5px;font-weight:bold;line-height:15px;color:#000;width:83px;text-align:center">11011101</div>
<div class="a pre mono" style="left:160px;top:508px;font-size:12.5px;font-weight:bold;line-height:15px;color:#000;width:83px;text-align:center">01000011</div>
<div class="a pre " style="left:31px;top:534px;font-size:10px;line-height:12px;color:#202020">oct:</div>
<div class="a" style="left:70px;top:529px;width:83px;height:19px;background:#fff;border-top:1px solid #808080;border-left:1px solid #808080;border-right:1px solid #fff;border-bottom:1px solid #fff"><div style="position:absolute;left:0;top:0;right:0;bottom:0;border-top:1px solid #404040;border-left:1px solid #404040;border-right:1px solid #d4d0c8;border-bottom:1px solid #d4d0c8"></div></div>
<div class="a" style="left:160px;top:529px;width:83px;height:19px;background:#fff;border-top:1px solid #808080;border-left:1px solid #808080;border-right:1px solid #fff;border-bottom:1px solid #fff"><div style="position:absolute;left:0;top:0;right:0;bottom:0;border-top:1px solid #404040;border-left:1px solid #404040;border-right:1px solid #d4d0c8;border-bottom:1px solid #d4d0c8"></div></div>
<div class="a pre mono" style="left:70px;top:532px;font-size:12.5px;font-weight:bold;line-height:15px;color:#000;width:83px;text-align:center">335</div>
<div class="a pre mono" style="left:160px;top:532px;font-size:12.5px;font-weight:bold;line-height:15px;color:#000;width:83px;text-align:center">103</div>
<div class="a" style="left:26px;top:557px;width:222px;height:80px;border:1px solid #808080;box-shadow:inset 1px 1px 0 #fff,1px 1px 0 #fff"></div>
<div class="a" style="left:33px;top:552px;width:64px;height:12px;background:#d4d0c8"></div>
<div class="a pre " style="left:37px;top:552px;font-size:10px;line-height:12px;color:#202020">decimal 8 bit</div>
<div class="a pre " style="left:33px;top:571px;font-size:10px;line-height:12px;color:#202020">unsigned:</div>
<div class="a" style="left:90px;top:566px;width:63px;height:19px;background:#fff;border-top:1px solid #808080;border-left:1px solid #808080;border-right:1px solid #fff;border-bottom:1px solid #fff"><div style="position:absolute;left:0;top:0;right:0;bottom:0;border-top:1px solid #404040;border-left:1px solid #404040;border-right:1px solid #d4d0c8;border-bottom:1px solid #d4d0c8"></div></div>
<div class="a" style="left:173px;top:566px;width:63px;height:19px;background:#fff;border-top:1px solid #808080;border-left:1px solid #808080;border-right:1px solid #fff;border-bottom:1px solid #fff"><div style="position:absolute;left:0;top:0;right:0;bottom:0;border-top:1px solid #404040;border-left:1px solid #404040;border-right:1px solid #d4d0c8;border-bottom:1px solid #d4d0c8"></div></div>
<div class="a pre mono" style="left:90px;top:569.5px;font-size:12.5px;font-weight:bold;line-height:15px;color:#000;width:63px;text-align:center">221</div>
<div class="a pre mono" style="left:173px;top:569.5px;font-size:12.5px;font-weight:bold;line-height:15px;color:#000;width:63px;text-align:center">67</div>
<div class="a pre " style="left:33px;top:595px;font-size:10px;line-height:12px;color:#202020">signed:</div>
<div class="a" style="left:90px;top:590px;width:63px;height:19px;background:#fff;border-top:1px solid #808080;border-left:1px solid #808080;border-right:1px solid #fff;border-bottom:1px solid #fff"><div style="position:absolute;left:0;top:0;right:0;bottom:0;border-top:1px solid #404040;border-left:1px solid #404040;border-right:1px solid #d4d0c8;border-bottom:1px solid #d4d0c8"></div></div>
<div class="a" style="left:173px;top:590px;width:63px;height:19px;background:#fff;border-top:1px solid #808080;border-left:1px solid #808080;border-right:1px solid #fff;border-bottom:1px solid #fff"><div style="position:absolute;left:0;top:0;right:0;bottom:0;border-top:1px solid #404040;border-left:1px solid #404040;border-right:1px solid #d4d0c8;border-bottom:1px solid #d4d0c8"></div></div>
<div class="a pre mono" style="left:90px;top:593.5px;font-size:12.5px;font-weight:bold;line-height:15px;color:#000;width:63px;text-align:center">-35</div>
<div class="a pre mono" style="left:173px;top:593.5px;font-size:12.5px;font-weight:bold;line-height:15px;color:#000;width:63px;text-align:center">67</div>
<div class="a pre " style="left:33px;top:618px;font-size:10px;line-height:12px;color:#202020">ascii:</div>
<div class="a" style="left:90px;top:613px;width:63px;height:19px;background:#fff;border-top:1px solid #808080;border-left:1px solid #808080;border-right:1px solid #fff;border-bottom:1px solid #fff"><div style="position:absolute;left:0;top:0;right:0;bottom:0;border-top:1px solid #404040;border-left:1px solid #404040;border-right:1px solid #d4d0c8;border-bottom:1px solid #d4d0c8"></div></div>
<div class="a" style="left:173px;top:613px;width:63px;height:19px;background:#fff;border-top:1px solid #808080;border-left:1px solid #808080;border-right:1px solid #fff;border-bottom:1px solid #fff"><div style="position:absolute;left:0;top:0;right:0;bottom:0;border-top:1px solid #404040;border-left:1px solid #404040;border-right:1px solid #d4d0c8;border-bottom:1px solid #d4d0c8"></div></div>
<div class="a pre " style="left:90px;top:616px;font-size:12px;line-height:14px;color:#405070;width:63px;text-align:center">&Yacute;</div>
<div class="a pre " style="left:173px;top:616px;font-size:12px;line-height:14px;color:#405070;width:63px;text-align:center">C</div>
<div class="a" style="left:581px;top:410px;width:431px;height:205px;background:#fff;border-left:1px solid #d0d0d0;border-right:1px solid #d0d0d0;border-bottom:1px solid #d0d0d0;border-radius:5px 5px 0 0;box-shadow:0 1px 10px 1px rgba(0,0,0,.28)"></div>
<div class="a" style="left:581px;top:410px;width:431px;height:28px;background:#3c3b37;border-radius:5px 5px 0 0"></div>
<div class="a pre " style="left:715px;top:415.5px;color:#838079;font-weight:bold;font-size:14px;line-height:17px"><span style="letter-spacing:-.18px">Random Access Memory</span></div>
<div class="a" style="left:952.5px;top:416.0px;width:15px;height:15px;border-radius:50%;background:#55544f"></div>
<div class="a" style="left:971.5px;top:416.0px;width:15px;height:15px;border-radius:50%;background:#55544f"></div>
<div class="a" style="left:990.5px;top:416.0px;width:15px;height:15px;border-radius:50%;background:#55544f"></div>
<div class="a" style="left:956px;top:422.8px;width:8px;height:1.4px;background:#3c3b37"></div>
<div class="a" style="left:975.5px;top:420.0px;width:7px;height:7px;border:1.2px solid #3c3b37"></div>
<svg class="a" style="left:994.5px;top:420.0px" width="7" height="7"><path d="M0.5 0.5L6.5 6.5M6.5 0.5L0.5 6.5" stroke="#3c3b37" stroke-width="1.2"/></svg>
<div class="a" style="left:591px;top:442px;width:102px;height:21px;background:#fff;border-top:1px solid #808080;border-left:1px solid #808080;border-right:1px solid #fff;border-bottom:1px solid #fff"><div style="position:absolute;left:0;top:0;right:0;bottom:0;border-top:1px solid #404040;border-left:1px solid #404040;border-right:1px solid #d4d0c8;border-bottom:1px solid #d4d0c8"></div></div>
<div class="a pre mono" style="left:591px;top:446.5px;font-size:12.5px;font-weight:bold;line-height:15px;color:#000;width:102px;text-align:center">B800:017E</div>
<div class="a" style="left:702px;top:440px;width:108px;height:24px;border:1px solid #000"></div>
<div class="a" style="left:703px;top:441px;width:106px;height:22px;background:#d4d0c8;border-top:1px solid #fff;border-left:1px solid #fff;border-right:1px solid #404040;border-bottom:1px solid #404040"><div style="position:absolute;left:0;top:0;right:0;bottom:0;border-right:1px solid #808080;border-bottom:1px solid #808080"></div></div>
<div class="a pre " style="left:702px;top:446px;font-size:11px;font-weight:bold;line-height:13px;color:#202020;width:108px;text-align:center">update</div>
<svg class="a" style="left:824px;top:444px;overflow:visible" width="12" height="12" viewBox="0 0 12 12"><circle cx="6" cy="6" r="5.5" fill="#fff" stroke="#e0ddd6" stroke-width="1"/><path d="M2.1 9.9A5.5 5.5 0 0 1 9.9 2.1" fill="none" stroke="#808080" stroke-width="1.1"/><path d="M2.8 9.2A4.5 4.5 0 0 1 9.2 2.8" fill="none" stroke="#404040" stroke-width="1"/><circle cx="6" cy="6" r="2" fill="#000"/></svg>
<div class="a pre " style="left:840px;top:445px;font-size:10px;line-height:12px;color:#202020">table</div>
<svg class="a" style="left:905px;top:444px;overflow:visible" width="12" height="12" viewBox="0 0 12 12"><circle cx="6" cy="6" r="5.5" fill="#fff" stroke="#e0ddd6" stroke-width="1"/><path d="M2.1 9.9A5.5 5.5 0 0 1 9.9 2.1" fill="none" stroke="#808080" stroke-width="1.1"/><path d="M2.8 9.2A4.5 4.5 0 0 1 9.2 2.8" fill="none" stroke="#404040" stroke-width="1"/></svg>
<div class="a pre " style="left:921px;top:445px;font-size:10px;line-height:12px;color:#202020">list</div>
<div class="a" style="left:588px;top:476px;width:417px;height:132px;border:1px solid #202020;background:#fff"></div>
<div class="a pre " style="left:595px;top:483px;font-size:12px;line-height:14.2px;color:#202020">B800:017E
B800:018E
B800:019E
B800:01AE
B800:01BE
B800:01CE
B800:01DE
B800:01EE</div>
<div class="a pre " style="left:663px;top:483px;font-size:12px;line-height:14.2px;color:#202020;letter-spacing:.15px">43 DD 00 07 00 07 00 07-00 07 00 07 00 07 00 07
00 07 00 07 00 07 00 07-00 07 00 07 00 07 00 07
00 07 00 07 00 07 00 07-00 07 00 07 00 07 00 07</div>
<div class="a pre " style="left:665px;top:525.6px;font-size:12px;line-height:14.2px;color:#202020;letter-spacing:.15px">00 07 00 07 00 07 00 07-00 07 00 07 00 07 00 07
00 07 00 07 00 07 00 07-00 07 00 07 00 07 00 07
00 07 00 07 00 07 00 07-00 07 00 07 00 07 00 07
00 07 00 07 00 07 00 07-00 07 00 07 00 07 00 07
00 07 00 07 00 07 00 07-00 07 00 07 00 07 00 07</div>
<div class="a pre " style="left:952px;top:483px;font-size:12px;line-height:14.2px;color:#202020">C&Yacute;<span style="letter-spacing:-.5px">..........</span></div>
<div class="a pre " style="left:949px;top:497.2px;font-size:12px;line-height:14.2px;color:#202020;color:#505050"><span style="letter-spacing:-.2px">...............</span>
<span style="letter-spacing:-.2px">...............</span></div>
<div class="a pre " style="left:951px;top:525.6px;font-size:12px;line-height:14.2px;color:#202020;color:#505050"><span style="letter-spacing:-.3px">...............</span>
<span style="letter-spacing:-.3px">...............</span>
<span style="letter-spacing:-.3px">...............</span>
<span style="letter-spacing:-.3px">...............</span>
<span style="letter-spacing:-.3px">...............</span></div>
</body></html>
